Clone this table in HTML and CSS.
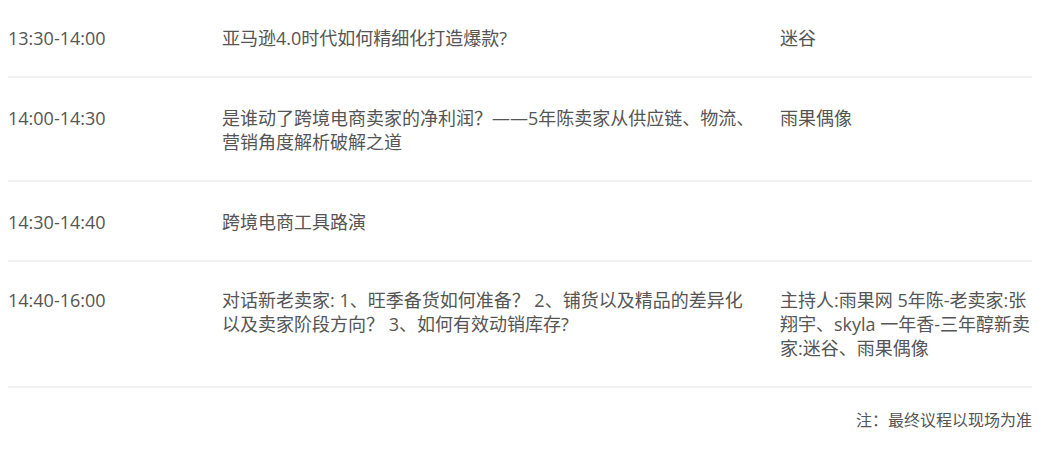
FILE: index.html
```html
<!DOCTYPE html>
<html lang="zh-CN">
<head>
<meta charset="utf-8">
<title>议程</title>
<link rel="stylesheet" href="styles.css">
</head>
<body>
<div class="schedule">
  <div class="row">
    <div class="time">13:30-14:00</div>
    <div class="topic">亚马逊4.0时代如何精细化打造爆款?</div>
    <div class="speaker">迷谷</div>
  </div>
  <div class="row">
    <div class="time">14:00-14:30</div>
    <div class="topic">是谁动了跨境电商卖家的净利润？——5年陈卖家从供应链、物流、营销角度解析破解之道</div>
    <div class="speaker">雨果偶像</div>
  </div>
  <div class="row">
    <div class="time">14:30-14:40</div>
    <div class="topic">跨境电商工具路演</div>
    <div class="speaker"></div>
  </div>
  <div class="row">
    <div class="time">14:40-16:00</div>
    <div class="topic">对话新老卖家: 1、旺季备货如何准备？ 2、铺货以及精品的差异化以及卖家阶段方向？ 3、如何有效动销库存?</div>
    <div class="speaker">主持人:雨果网 5年陈-老卖家:张翔宇、skyla 一年香-三年醇新卖家:迷谷、雨果偶像</div>
  </div>
  <p class="note">注：最终议程以现场为准</p>
</div>
</body>
</html>
```

FILE: styles.css
```css
html, body {
  margin: 0;
  padding: 0;
  background: #fff;
}
body {
  padding: 0 8px;
  font-family: "Open Sans", "Noto Sans CJK SC", sans-serif;
  color: #555;
}
.schedule {
  width: 1024px;
}
.row {
  display: grid;
  grid-template-columns: 214px 558px 1fr;
  padding: 28px 0 26px;
  border-bottom: 2px solid #f2f2f2;
  font-size: 18px;
  line-height: 24px;
}
.row:first-child {
  padding-top: 26px;
}
.row:last-of-type {
  padding-top: 26px;
  padding-bottom: 26px;
}
.topic {
  padding-right: 23px;
}
.note {
  margin: 20px 0 0;
  text-align: right;
  font-size: 16px;
  line-height: 24px;
}
```
